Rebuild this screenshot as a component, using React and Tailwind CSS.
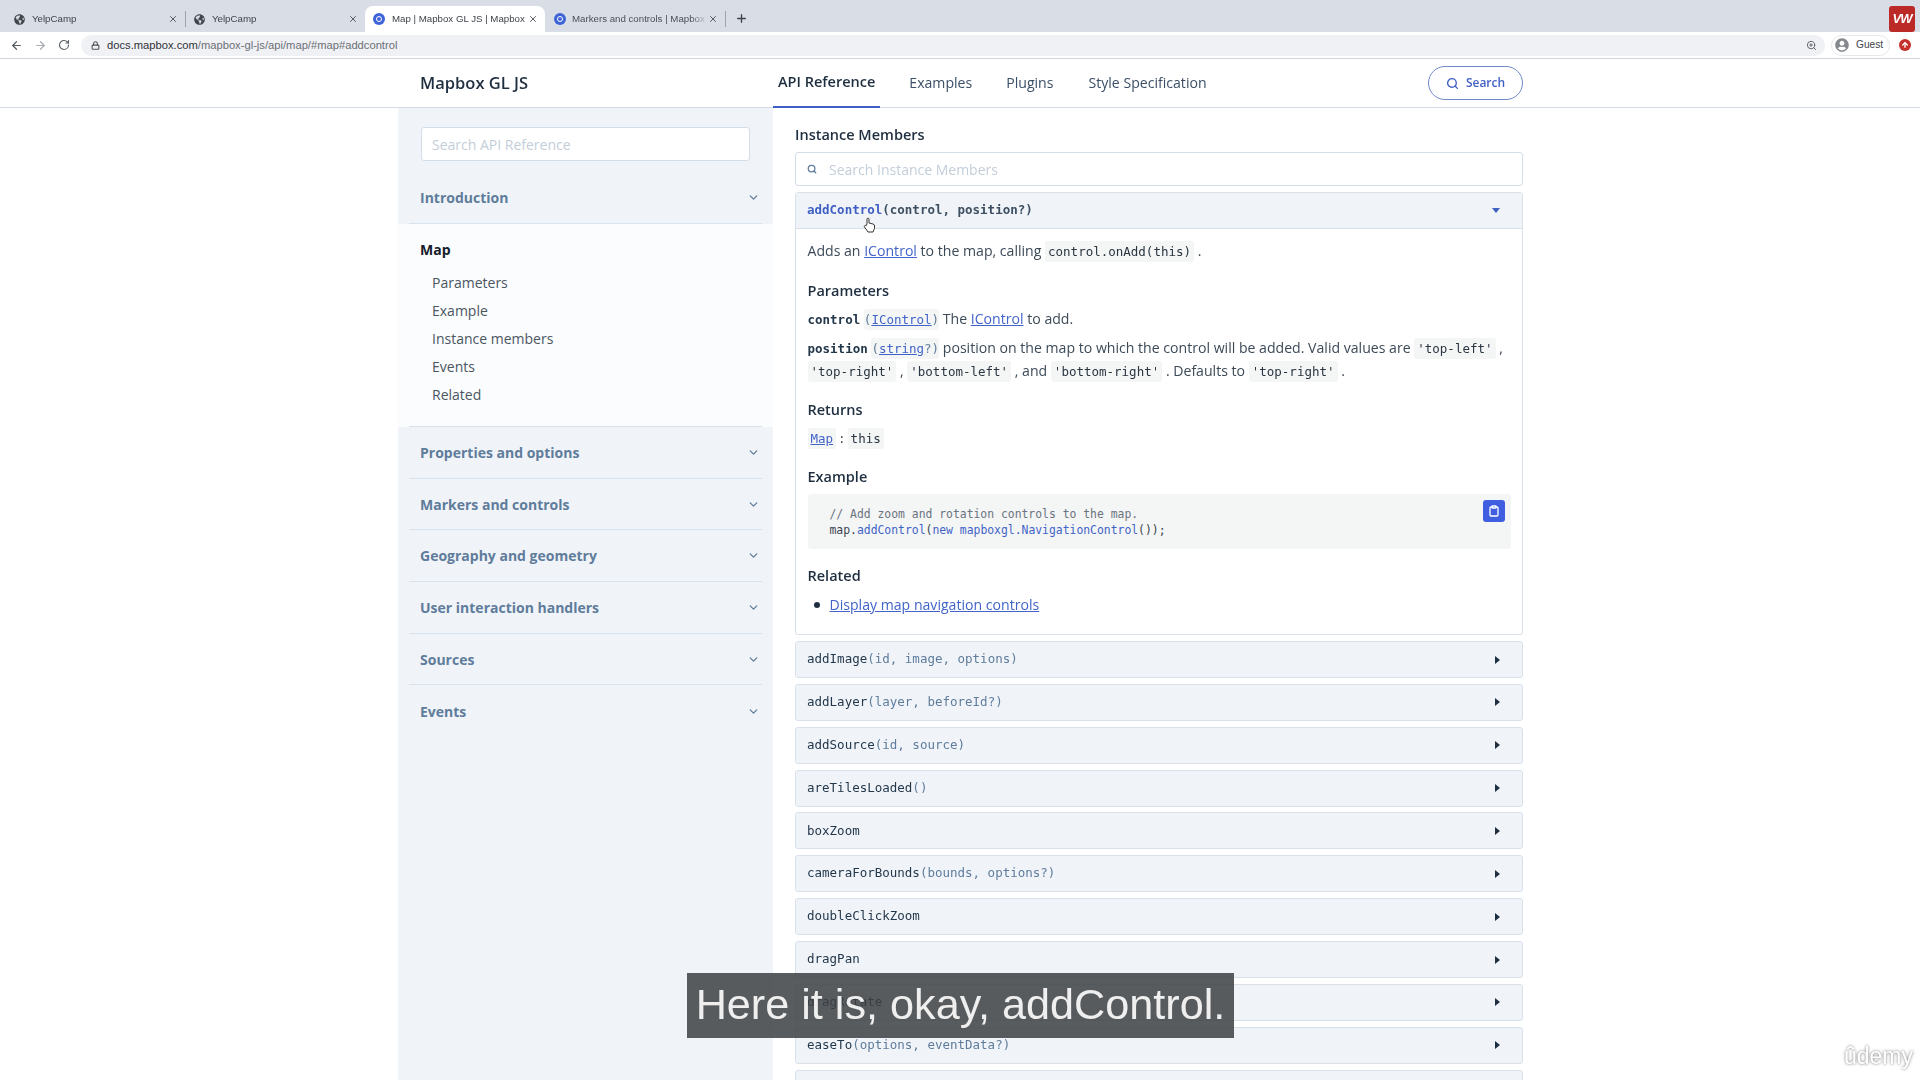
import React from "react";
import { ArrowLeft, ArrowRight, RotateCw, Lock, X, Plus, Search, ChevronDown, ZoomIn, ArrowUp, Clipboard } from "lucide-react";
import { FaGlobeAmericas, FaUserCircle } from "react-icons/fa";

function Tab({ title, active, divider, icon, fade }) {
  return (
    <div className={active ? "relative w-[180px] h-[26px] flex items-center pl-[8px] pr-[7px] bg-white rounded-t-lg" : "relative w-[180px] h-[26px] flex items-center pl-[9px] pr-[7px]"}>
      {icon === "globe" ? (
        <FaGlobeAmericas className="w-[11px] h-[11px] text-[#41464d] shrink-0" />
      ) : (
        <span className="w-[12px] h-[12px] rounded-full bg-[#3f64d8] shrink-0 flex items-center justify-center">
          <span className="w-[6px] h-[6px] rounded-full border-[1.5px] border-white" />
        </span>
      )}
      <span className={fade ? "ml-[6px] w-[132px] text-[9.7px] text-[#4b5058] whitespace-nowrap overflow-hidden flex-1 [mask-image:linear-gradient(to_right,black_88%,transparent)]" : "ml-[7px] w-[132px] text-[9.7px] text-[#3e434a] whitespace-nowrap overflow-hidden flex-1"}>{title}</span>
      <X className="w-[10px] h-[10px] text-[#4a4e55] shrink-0" strokeWidth={2.2} />
      {divider && <span className="absolute right-[-1px] top-[5px] h-[16px] w-px bg-[#9ea3ab]" />}
    </div>
  );
}

function ChromeBar() {
  return (
    <div className="font-['Liberation_Sans',sans-serif]">
      <div className="h-[32px] bg-[#d9dde5] flex items-end pl-[5px] relative">
        <Tab title="YelpCamp" icon="globe" divider />
        <Tab title="YelpCamp" icon="globe" />
        <Tab title="Map | Mapbox GL JS | Mapbox" icon="map" active />
        <Tab title="Markers and controls | Mapbox" icon="map" divider fade />
        <Plus className="w-[13px] h-[13px] ml-[10px] mb-[7px] text-[#3e434a]" strokeWidth={2.5} />
        <div className="ml-auto mr-[5px] w-[26px] h-[26px] bg-[#bb2a27] rounded-[3px] flex items-center justify-center text-white text-[13px] font-bold italic tracking-[-1px]">VW</div>
      </div>
      <div className="h-[27px] bg-white border-b border-[#cfd4dc] flex items-center pl-[10px] pr-[9px]">
        <ArrowLeft className="w-[13px] h-[13px] text-[#555a61]" strokeWidth={2.2} />
        <ArrowRight className="ml-[11px] w-[13px] h-[13px] text-[#a9adb3]" strokeWidth={2.2} />
        <RotateCw className="ml-[11px] w-[12px] h-[12px] text-[#555a61]" strokeWidth={2.2} />
        <div className="ml-[11px] flex-1 h-[21px] rounded-full bg-[#f0f1f4] flex items-center pl-[10px] pr-[8px]">
          <Lock className="w-[9px] h-[9px] text-[#50555c]" strokeWidth={3} />
          <span className="ml-[7px] text-[11.2px] text-[#2f3338]">docs.mapbox.com<span className="text-[#6b7077]">/mapbox-gl-js/api/map/#map#addcontrol</span></span>
          <ZoomIn className="ml-auto w-[11px] h-[11px] text-[#555a61]" strokeWidth={2} />
        </div>
        <div className="ml-[6px] h-[21px] w-[59px] rounded-full border border-[#e6e7ea] flex items-center pl-[3px]">
          <FaUserCircle className="w-[14px] h-[14px] text-[#85888d]" />
          <span className="ml-[7px] text-[10.2px] text-[#3e434a]">Guest</span>
        </div>
        <span className="ml-[9px] w-[12px] h-[12px] rounded-full bg-[#c5302a] flex items-center justify-center">
          <ArrowUp className="w-[8px] h-[8px] text-white" strokeWidth={4} />
        </span>
      </div>
    </div>
  );
}

function Header() {
  return (
    <div className="h-[49px] border-b border-[#d5dbe3] bg-white flex pl-[420px]">
      <div className="w-[1103px] flex items-center relative h-[48px]">
        <span className="text-[16.5px] font-semibold text-[#1f2f40] w-[353px]">Mapbox GL JS</span>
        <div className="h-[49px] px-[5px] flex items-center border-b-2 border-[#3f5fc4] text-[14.5px] font-semibold text-[#1f2f40]">API Reference</div>
        <span className="ml-[29px] text-[14.1px] text-[#3b4f66]">Examples</span>
        <span className="ml-[34px] text-[14.1px] text-[#3b4f66]">Plugins</span>
        <span className="ml-[35px] text-[14.1px] text-[#3b4f66]">Style Specification</span>
        <div className="ml-auto h-[34px] w-[95px] rounded-full border border-[#6f88c8] flex items-center justify-center gap-[7px] text-[#3f5fc4] text-[12px] font-semibold">
          <Search className="w-[13px] h-[13px]" strokeWidth={2.6} />
          Search
        </div>
      </div>
    </div>
  );
}

function SideItem({ title }) {
  return (
    <div className="mx-[11px] h-[51.7px] border-b border-[#d8e3ed] flex items-center justify-between pl-[11px] pr-[2px]">
      <span className="text-[14px] font-bold text-[#5f7c9b]">{title}</span>
      <ChevronDown className="w-[13px] h-[13px] text-[#5f7c9b]" strokeWidth={2.4} />
    </div>
  );
}

function Sidebar() {
  const subs = ["Parameters", "Example", "Instance members", "Events", "Related"];
  return (
    <div className="w-[375px] bg-[#f0f4f9] shrink-0">
      <div className="px-[23px] pt-[19px] pb-[10px]">
        <div className="h-[34px] bg-white border border-[#d3dde8] rounded-[3px] flex items-center pl-[10px] text-[14px] text-[#c3ced9]">Search API Reference</div>
      </div>
      <div className="mx-[11px] h-[53px] border-b border-[#d8e3ed] flex items-center justify-between pl-[11px] pr-[2px]">
        <span className="text-[14px] font-bold text-[#5f7c9b]">Introduction</span>
        <ChevronDown className="w-[13px] h-[13px] text-[#5f7c9b]" strokeWidth={2.4} />
      </div>
      <div className="bg-[#fbfcfd] pt-[14.5px] h-[203px] relative">
        <div className="pl-[22px] text-[14px] leading-[22px] font-bold text-[#16202b]">Map</div>
        <div className="pl-[34px] pt-[8px] flex flex-col">
          {subs.map((s) => (
            <div key={s} className="h-[28px] flex items-center text-[14px] text-[#4a5662]">{s}</div>
          ))}
        </div>
        <div className="absolute left-[11px] right-[11px] bottom-0 h-px bg-[#d8e3ed]" />
      </div>
      <SideItem title="Properties and options" />
      <SideItem title="Markers and controls" />
      <SideItem title="Geography and geometry" />
      <SideItem title="User interaction handlers" />
      <SideItem title="Sources" />
      <div className="mx-[11px] h-[52px] flex items-center justify-between pl-[11px] pr-[2px]">
        <span className="text-[14px] font-bold text-[#5f7c9b]">Events</span>
        <ChevronDown className="w-[13px] h-[13px] text-[#5f7c9b]" strokeWidth={2.4} />
      </div>
    </div>
  );
}

const mono = "font-['DejaVu_Sans_Mono',monospace]";
const link = "text-[#4264c8] underline";

function Code({ children }) {
  return <code className={`${mono} text-[12.5px] bg-[#f4f5f5] rounded-[3px] px-[3px] py-[3px] text-[#2a3642]`}>{children}</code>;
}

function H({ children, mt }) {
  return <div className={`${mt} text-[14.5px] leading-[20px] font-semibold text-[#1f2f40]`}>{children}</div>;
}

function Row({ name, args }) {
  return (
    <div className="h-[37px] bg-[#f0f4f9] border border-[#d8e1ea] rounded-[3px] flex items-center justify-between pl-[11px] pr-[22px] shrink-0">
      <span className={`${mono} text-[12.5px] text-[#24384c]`}>{name}<span className="text-[#5f7c9b]">{args}</span></span>
      <span className="w-0 h-0 border-y-[4px] border-y-transparent border-l-[5px] border-l-[#1f2f40]" />
    </div>
  );
}

function Main() {
  const rows = [
    ["addImage", "(id, image, options)"],
    ["addLayer", "(layer, beforeId?)"],
    ["addSource", "(id, source)"],
    ["areTilesLoaded", "()"],
    ["boxZoom", ""],
    ["cameraForBounds", "(bounds, options?)"],
    ["doubleClickZoom", ""],
    ["dragPan", ""],
    ["dragRotate", ""],
    ["easeTo", "(options, eventData?)"],
  ];
  return (
    <div className="ml-[22px] w-[728px] shrink-0 pt-[16px]">
      <div className="text-[14.5px] leading-[22px] font-semibold text-[#1f2f40]">Instance Members</div>
      <div className="mt-[6px] h-[34px] bg-white border border-[#d3dde8] rounded-[3px] flex items-center pl-[11px] text-[14px] text-[#c3ced9]">
        <Search className="w-[10px] h-[10px] text-[#5f7c9b] mr-[12px]" strokeWidth={3} />
        Search Instance Members
      </div>
      <div className="mt-[6px] border border-[#d8e1ea] rounded-[3px] h-[443px]">
        <div className="h-[36px] bg-[#f0f4f9] border-b border-[#d8e1ea] flex items-center justify-between pl-[11px] pr-[22px]">
          <span className={`${mono} text-[12.5px] font-semibold text-[#3d4f60]`}><span className="text-[#3f5fc4]">addControl</span>(control, position?)</span>
          <span className="w-0 h-0 border-x-[4px] border-x-transparent border-t-[5px] border-t-[#3f5fc4]" />
        </div>
        <div className="pl-[11.5px] pr-[11px] text-[14.1px] text-[#3c4a58]">
          <div className="pt-[11px] leading-[22px]">Adds an <span className={link}>IControl</span> to the map, calling <Code>control.onAdd(this)</Code> .</div>
          <H mt="mt-[18px]">Parameters</H>
          <div className="mt-[7px] leading-[22px]"><span className={`${mono} text-[12.5px] font-bold text-[#24384c]`}>control</span> <span className={`${mono} text-[12.5px] bg-[#f4f5f5] rounded-[3px] py-[3px] text-[#5f7c9b]`}>(<span className={link}>IControl</span>)</span> The <span className={link}>IControl</span> to add.</div>
          <div className="mt-[6px] leading-[21.6px]"><span className={`${mono} text-[12.5px] font-bold text-[#24384c]`}>position</span> <span className={`${mono} text-[12.5px] bg-[#f4f5f5] rounded-[3px] py-[3px] text-[#5f7c9b]`}>(<span className={link}>string</span>?)</span> position on the map to which the control will be added. Valid values are <Code>'top-left'</Code> ,<br /><Code>'top-right'</Code> , <Code>'bottom-left'</Code> , and <Code>'bottom-right'</Code> . Defaults to <Code>'top-right'</Code> .</div>
          <H mt="mt-[18px]">Returns</H>
          <div className="mt-[6.5px] leading-[22px]"><span className={`${mono} text-[12.5px] bg-[#f4f5f5] rounded-[3px] px-[3px] py-[3px]`}><span className={link}>Map</span></span><span className={`${mono} text-[12.5px] mx-[2px]`}>:</span><Code>this</Code></div>
          <H mt="mt-[17.5px]">Example</H>
          <div className="mt-[7px] h-[55px] bg-[#f4f5f5] rounded-[3px] pl-[22px] pt-[12px] relative">
            <div className={`${mono} text-[11.4px] leading-[16px] text-[#6a7480]`}>// Add zoom and rotation controls to the map.</div>
            <div className={`${mono} text-[11.4px] leading-[16px] text-[#38444f]`}>map.<span className="text-[#3f64c8]">addControl</span>(<span className="text-[#3f64c8]">new mapboxgl.NavigationControl</span>());</div>
            <span className="absolute right-[6px] top-[6px] w-[22px] h-[22px] bg-[#3f5fe0] rounded-[3px] flex items-center justify-center">
              <Clipboard className="w-[12px] h-[12px] text-white" strokeWidth={2.6} />
            </span>
          </div>
          <H mt="mt-[17px]">Related</H>
          <div className="mt-[8px] leading-[22px] flex items-center">
            <span className="ml-[6px] w-[6px] h-[6px] rounded-full bg-[#1f2f40]" />
            <span className={`${link} ml-[10px]`}>Display map navigation controls</span>
          </div>
        </div>
      </div>
      <div className="mt-[6px] flex flex-col gap-[5.86px]">
        {rows.map(([n, a]) => <Row key={n} name={n} args={a} />)}
        <div className="h-[37px] bg-[#f0f4f9] border border-[#d8e1ea] rounded-[3px] shrink-0" />
      </div>
    </div>
  );
}

export default function App() {
  return (
    <div className="relative w-[1920px] h-[1080px] overflow-hidden bg-white font-['Open_Sans',sans-serif]">
      <div className="w-full h-full flex flex-col blur-[0.35px]">
        <ChromeBar />
        <Header />
        <div className="flex flex-1 min-h-0 pl-[398px]">
          <Sidebar />
          <Main />
        </div>
      </div>
      {/* hand cursor over the docs */}
      <svg className="absolute left-[863px] top-[217px] w-[13px] h-[16px]" viewBox="0 0 13 16" fill="#fff" stroke="#333" strokeWidth="1">
        <path d="M4 7V2.2a1 1 0 0 1 2 0V6l4 1a2 2 0 0 1 1.5 2v2.5L10 15H5L1.5 10a1 1 0 0 1 1.6-1.2z" />
      </svg>
      {/* video caption */}
      <div className="absolute left-[687px] top-[973px] w-[547px] h-[65px] bg-[#3c3f42]/85 flex items-center justify-center pb-[2px] font-['Liberation_Sans',sans-serif] text-[43.2px] text-[#efefef] whitespace-nowrap">Here it is, okay, addControl.</div>
      {/* watermark */}
      <div className="absolute left-[1844px] top-[1042px] text-[23px] leading-[28px] text-white font-['Liberation_Sans',sans-serif] [text-shadow:0_0_3px_rgba(0,0,0,0.6)]">ûdemy</div>
    </div>
  );
}
